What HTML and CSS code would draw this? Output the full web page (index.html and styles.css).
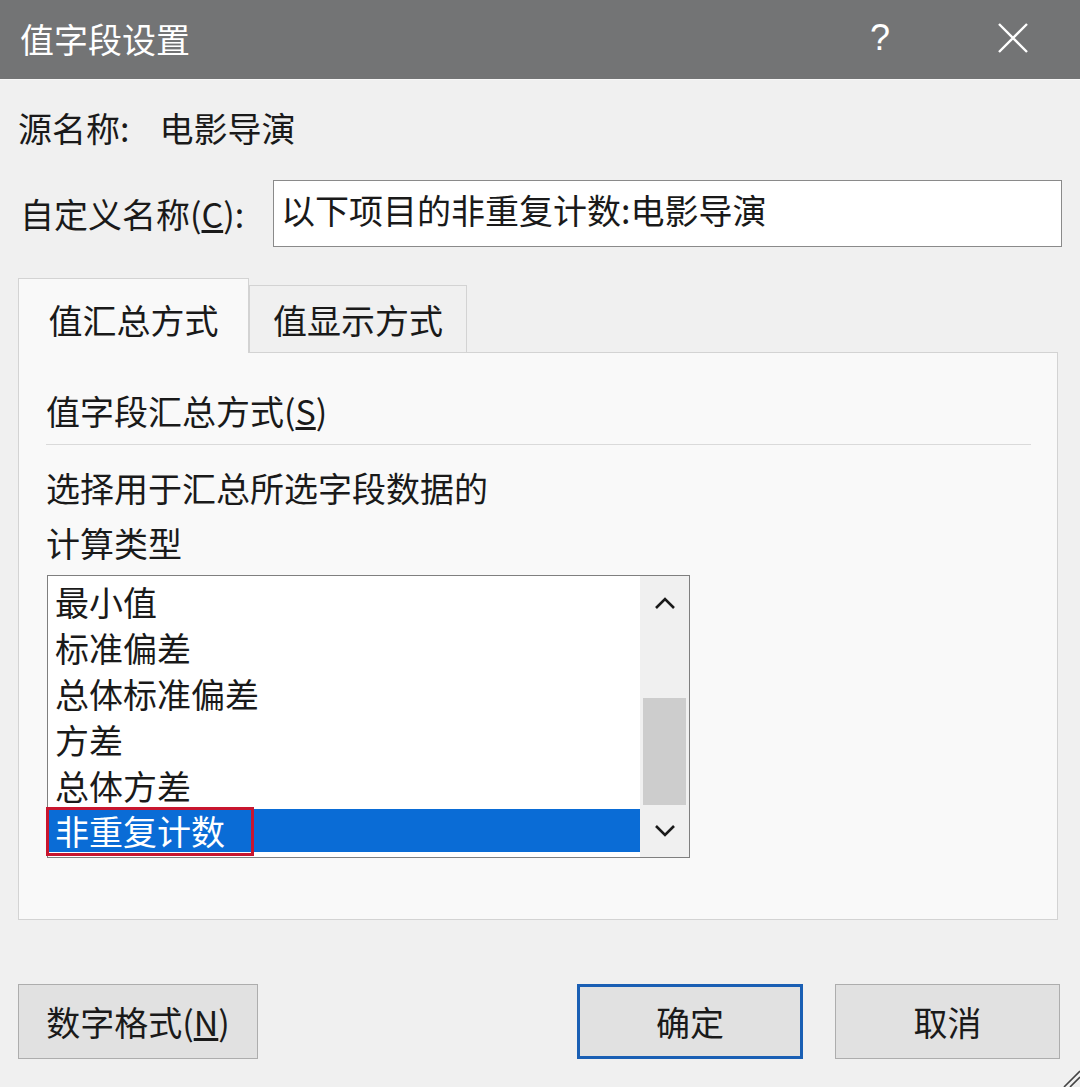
FILE: index.html
```html
<!DOCTYPE html>
<html lang="zh-CN">
<head>
<meta charset="utf-8">
<title>值字段设置</title>
<link rel="stylesheet" href="styles.css">
</head>
<body>
<div class="dialog">
  <div class="titlebar">
    <div class="title">值字段设置</div>
    <div class="help">?</div>
    <div class="close">
      <svg width="32" height="32" viewBox="0 0 32 32"><path d="M2 2 L30 30 M30 2 L2 30" stroke="#ffffff" stroke-width="2.4" fill="none"/></svg>
    </div>
  </div>
  <div class="content">
    <div class="source-row"><span>源名称:</span><span class="source-val">电影导演</span></div>
    <div class="name-row">
      <div class="name-label">自定义名称(<u>C</u>):</div>
      <div class="name-input">以下项目的非重复计数:电影导演</div>
    </div>
    <div class="tabs">
      <div class="tab tab-active">值汇总方式</div>
      <div class="tab tab-inactive">值显示方式</div>
    </div>
    <div class="panel">
      <div class="group-title">值字段汇总方式(<u>S</u>)</div>
      <div class="sep"></div>
      <div class="desc">选择用于汇总所选字段数据的<br>计算类型</div>
      <div class="listbox">
        <div class="items">
          <div class="item">最小值</div>
          <div class="item">标准偏差</div>
          <div class="item">总体标准偏差</div>
          <div class="item">方差</div>
          <div class="item">总体方差</div>
          <div class="item item-selected">非重复计数<span class="mark"></span></div>
        </div>
        <div class="scrollbar">
          <div class="sb-btn sb-up">
            <svg width="24" height="14" viewBox="0 0 24 14"><path d="M3 12 L12 3 L21 12" stroke="#1a1a1a" stroke-width="2.6" fill="none"/></svg>
          </div>
          <div class="sb-track"><div class="sb-thumb"></div></div>
          <div class="sb-btn sb-down">
            <svg width="24" height="14" viewBox="0 0 24 14"><path d="M3 2 L12 11 L21 2" stroke="#1a1a1a" stroke-width="2.6" fill="none"/></svg>
          </div>
        </div>
      </div>
    </div>
    <div class="footer">
      <div class="btn btn-format">数字格式(<u>N</u>)</div>
      <div class="btn-group">
        <div class="btn btn-ok">确定</div>
        <div class="btn btn-cancel">取消</div>
      </div>
    </div>
  </div>
  <svg class="grip" width="20" height="20" viewBox="0 0 20 20"><path d="M20 4 L4 20 M20 10 L10 20" stroke="#444" stroke-width="1.6" fill="none"/></svg>
</div>
</body>
</html>
```
FILE: styles.css
```css
html, body {
  margin: 0;
  padding: 0;
}
body {
  font-family: "Noto Sans CJK SC", "Noto Sans", sans-serif;
  color: #1a1a1a;
  background: #f0f0f0;
}
.dialog {
  position: relative;
  width: 1080px;
  height: 1087px;
  background: #f0f0f0;
  overflow: hidden;
}
.titlebar {
  height: 79px;
  background: #737475;
  border-bottom: 1px solid #f7f7f7;
  display: flex;
  align-items: center;
  padding-left: 20px;
  padding-right: 47px;
}
.title {
  flex: 1;
  color: #ffffff;
  font-size: 34px;
  line-height: 40px;
  margin-top: -2px;
}
.help {
  width: 40px;
  text-align: center;
  color: #ffffff;
  font-family: "Liberation Sans", sans-serif;
  font-size: 36px;
  line-height: 40px;
  margin-right: 93px;
  margin-top: -4px;
}
.close {
  width: 40px;
  height: 40px;
  display: flex;
  align-items: center;
  justify-content: center;
  margin-top: -4px;
}
.content {
  padding: 0 18px;
  font-size: 34px;
}
.source-row {
  margin-top: 28px;
  height: 40px;
  line-height: 40px;
}
.source-val {
  margin-left: 30px;
}
.name-row {
  margin-top: 32px;
  display: flex;
  align-items: center;
}
.name-label {
  width: 253px;
  padding-left: 2px;
  line-height: 40px;
}
.name-input {
  flex: 1;
  height: 67px;
  box-sizing: border-box;
  border: 1px solid #8a8a8a;
  background: #ffffff;
  padding-left: 7px;
  line-height: 58px;
}
.tabs {
  margin-top: 31px;
  height: 74px;
  display: flex;
  align-items: flex-end;
}
.tab {
  box-sizing: border-box;
  text-align: center;
  border: 1px solid #d3d3d3;
  border-bottom: none;
}
.tab-active {
  width: 231px;
  height: 75px;
  background: #f9f9f9;
  margin-bottom: -1px;
  position: relative;
  z-index: 1;
  line-height: 82px;
}
.tab-inactive {
  width: 218px;
  height: 67px;
  background: #f0f0f0;
  line-height: 68px;
}
.panel {
  width: 1040px;
  height: 568px;
  box-sizing: border-box;
  border: 1px solid #d3d3d3;
  background: #f9f9f9;
  padding: 38px 26px 0 27px;
}
.group-title {
  line-height: 40px;
}
.sep {
  margin-top: 13px;
  height: 1px;
  background: #dadada;
}
.desc {
  margin-top: 15px;
  line-height: 55px;
}
.listbox {
  margin-top: 5px;
  margin-left: 1px;
  width: 643px;
  height: 283px;
  box-sizing: border-box;
  border: 1px solid #7f7f7f;
  background: #ffffff;
  display: flex;
}
.items {
  flex: 1;
  padding-top: 3px;
}
.item {
  height: 46px;
  line-height: 46px;
  padding-left: 7px;
  white-space: nowrap;
}
.item-selected {
  position: relative;
  height: 43px;
  line-height: 43px;
  background: #0a6cd6;
  color: #ffffff;
}
.mark {
  position: absolute;
  left: -2px;
  top: -2px;
  width: 208px;
  height: 49px;
  box-sizing: border-box;
  border: 3px solid #c8162f;
}
.scrollbar {
  width: 49px;
  background: #f0f0f0;
  display: flex;
  flex-direction: column;
}
.sb-btn {
  display: flex;
  align-items: center;
  justify-content: center;
}
.sb-up {
  height: 50px;
  padding-top: 4px;
  box-sizing: border-box;
}
.sb-track {
  flex: 1;
  padding: 0 3px;
}
.sb-thumb {
  margin-top: 72px;
  height: 107px;
  background: #cdcdcd;
}
.sb-down {
  height: 52px;
}
.footer {
  margin-top: 64px;
  display: flex;
  justify-content: space-between;
  padding-right: 2px;
}
.btn-group {
  display: flex;
  gap: 32px;
}
.btn {
  height: 75px;
  box-sizing: border-box;
  border: 1px solid #adadad;
  background: #e1e1e1;
  display: flex;
  align-items: center;
  justify-content: center;
}
.btn-format {
  width: 240px;
}
.btn-ok {
  width: 226px;
  border: 3px solid #1a5fb4;
}
.btn-cancel {
  width: 225px;
}
.grip {
  position: absolute;
  right: 0;
  bottom: 0;
}
```
